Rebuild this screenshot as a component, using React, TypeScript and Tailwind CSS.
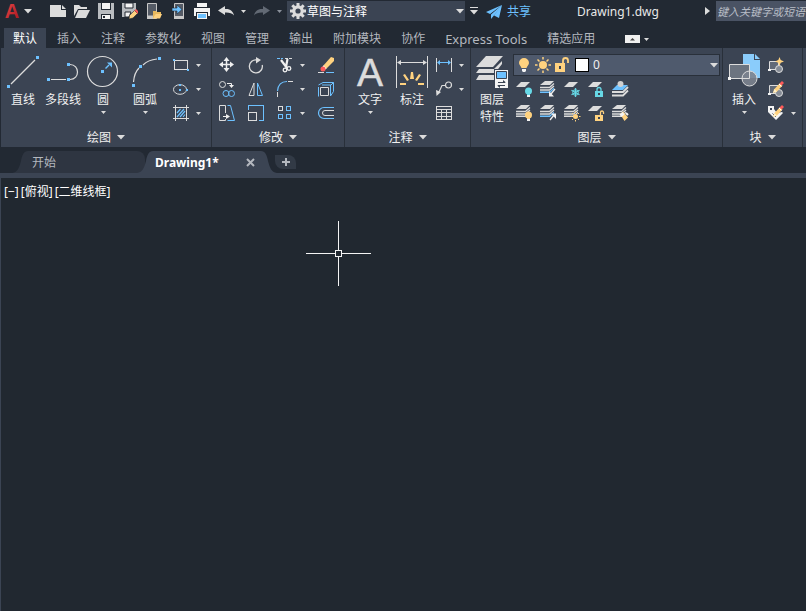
import type { ReactNode } from 'react'
import clsx from 'clsx'

const W = '#dcdcdc'
const B = '#6dc1ff'
const Y = '#ffd27f'
const C = '#67d8e6'
const R = '#ff5a5a'
const D = '#3b4453'

interface IconProps {
  size?: number
  crisp?: boolean
  children: ReactNode
}

function Icon({ size = 16, crisp, children }: IconProps) {
  return (
    <svg
      width={size}
      height={size}
      viewBox={`0 0 ${size} ${size}`}
      fill="none"
      shapeRendering={crisp ? 'crispEdges' : undefined}
      className="block shrink-0 overflow-visible"
      aria-hidden="true"
    >
      {children}
    </svg>
  )
}

function Caret({ large, className = 'fill-[#dcdcdc]' }: { large?: boolean; className?: string }) {
  return large ? (
    <svg width="8" height="5" viewBox="0 0 8 5" className={clsx('block shrink-0', className)} aria-hidden="true">
      <path d="M0 0h8L4 4.500z" />
    </svg>
  ) : (
    <svg width="5" height="3" viewBox="0 0 5 3" className={clsx('block shrink-0', className)} aria-hidden="true">
      <path d="M0 0h5L2.500 3z" />
    </svg>
  )
}

/* little square grips at the end points of the geometry */
function Grip({ x, y, s = 3 }: { x: number; y: number; s?: number }) {
  return <rect x={x} y={y} width={s} height={s} fill={B} shapeRendering="crispEdges" />
}

function Pencil() {
  return (
    <g>
      <path d="M6 10.500L12 4l2.500 2.500L8.500 13 5 14z" fill={Y} />
      <path d="M11.500 4.500L14 2l2 2-2.500 2.500z" fill={R} />
      <path d="M11 5l2.500 2.500" stroke="#fff" />
      <path d="M6.500 10l2.500 2.500-4 1.500z" fill="#fff1c9" />
    </g>
  )
}

function Padlock({ open, color }: { open?: boolean; color: string }) {
  return (
    <g>
      <rect x="7" y="10" width="8" height="6" fill={color} />
      <path d={open ? 'M12.500 10V7.500a1.500 1.500 0 0 1 3 0V9' : 'M9 10V8.500a2 2 0 0 1 4 0V10'} stroke={color} strokeWidth="1.300" />
      <rect x="10" y="12" width="2" height="2" fill={D} />
    </g>
  )
}

function SmallBulb({ color }: { color: string }) {
  return (
    <g>
      <circle cx="12.500" cy="10" r="3.500" fill={color} />
      <path d="M11 12h3v2h-3z" fill={color} />
      <path d="M11 14h3v2h-3z" fill="#f4f4f4" />
    </g>
  )
}

function SmallSun() {
  return (
    <g stroke={Y}>
      <circle cx="11.500" cy="11.500" r="2.500" fill={Y} stroke="none" />
      <path d="M11.500 6.500v1.500M11.500 15v1.500M6.500 11.500H8M15 11.500h1.500M8 8l1 1M14 14l1 1M8 15l1-1M14 9l1-1" />
    </g>
  )
}

function Sheet() {
  return <path d="M5 1h9L9 6H0z" fill={W} />
}

function Stack({ base = W }: { base?: string }) {
  return (
    <g>
      <path d="M5 0h9l-4 4H0z" fill={W} />
      <path d="M0 6.500h9.500L14 2.500M0 9h9.500L14 5" stroke={W} strokeWidth="1.300" />
      <path d="M0 10.500h9.500L14 6.500v1.500L10 12H0z" fill={base} />
    </g>
  )
}

const quickAccess: { label: string; icon: ReactNode }[] = [
  {
    label: '新建',
    icon: (
      <Icon>
        <path d="M0 2h11v5h5v7H0z" fill={W} />
        <path d="M12 2l4 4h-4z" fill={W} />
      </Icon>
    ),
  },
  {
    label: '打开',
    icon: (
      <Icon>
        <path d="M0 2h5l2 2h6v2H4l-4 7z" fill={W} />
        <path d="M4.500 7H16l-4 8H1z" fill={W} />
      </Icon>
    ),
  },
  {
    label: '保存',
    icon: (
      <Icon crisp>
        <path d="M0 0h16v16H0z" fill="#b9bcc0" />
        <path d="M3 0h10v7H3z" fill="#222933" />
        <path d="M4 0h8v6H4z" fill="#f4f4f4" />
        <path d="M3 11h10v5H3z" fill="#222933" />
        <path d="M4 12h8v4H4z" fill="#f4f4f4" />
        <path d="M5 13h2v2H5z" fill="#222933" />
      </Icon>
    ),
  },
  {
    label: '另存为',
    icon: (
      <Icon>
        <path d="M0 0h14v7l-6 7H0z" fill="#b9bcc0" />
        <path d="M3 0h8v5H3z" fill="#f4f4f4" stroke="#222933" />
        <path d="M3 9h6l-2 5H3z" fill="#f4f4f4" stroke="#222933" />
        <path d="M7.500 12.500l5-5 3 3-4.500 4.500-4 1z" fill={Y} stroke="#222933" strokeWidth=".6" />
        <path d="M12.500 7.500L14 6l2 2v2.500l-.5 0z" fill={R} />
      </Icon>
    ),
  },
  {
    label: '从移动设备打开',
    icon: (
      <Icon>
        <path d="M1.500 .5h9v15h-9z" fill="#555b66" stroke="#c8c8c8" />
        <path d="M1 12.500h8V16H1z" fill="#c8c8c8" />
        <path d="M7 8h3l1 1h4v2h-5l-3 5z" fill="#e9b95e" />
        <path d="M9.500 11H16l-2 4.500H7z" fill={Y} />
      </Icon>
    ),
  },
  {
    label: '保存到移动设备',
    icon: (
      <Icon>
        <path d="M4.500 .5h9v15h-9z" fill="#555b66" stroke="#c8c8c8" />
        <path d="M4 13h10v3H4z" fill="#c8c8c8" />
        <path d="M2 5h5V2l5 4.500L7 11V8H2z" fill={B} stroke="#222933" strokeWidth=".6" />
      </Icon>
    ),
  },
  {
    label: '打印',
    icon: (
      <Icon crisp>
        <path d="M3 0h10v4H3z" fill="#f4f4f4" />
        <path d="M0 5h16v8H0z" fill="#f4f4f4" />
        <path d="M2 9h12v7H2z" fill="#222933" />
        <path d="M3 10h10v6H3z" fill="#f4f4f4" />
        <path d="M4 11h8v4H4z" fill={B} />
      </Icon>
    ),
  },
]

function UndoIcon({ flip, color }: { flip?: boolean; color: string }) {
  return (
    <Icon>
      <g transform={flip ? 'matrix(-1 0 0 1 16 0)' : undefined}>
        <path d="M0 7.500L7 3v3c5-.5 8 2 9 6.500C14 10 11 9.300 7 9.500V12z" fill={color} />
      </g>
    </Icon>
  )
}

function GearIcon() {
  return (
    <Icon>
      <circle cx="8" cy="8" r="4.200" stroke={W} strokeWidth="3.200" />
      <path
        d="M8 0v3M8 13v3M0 8h3M13 8h3M2.300 2.300l2.200 2.200M11.500 11.500l2.200 2.200M2.300 13.700l2.200-2.200M11.500 4.500l2.200-2.200"
        stroke={W}
        strokeWidth="3"
      />
    </Icon>
  )
}

function TitleBar() {
  return (
    <header className="flex h-[22px] items-center">
      <button aria-label="应用程序菜单" className="flex w-[50px] shrink-0 items-center gap-1 pl-1">
        <svg width="16" height="22" viewBox="0 0 16 22" className="block overflow-visible" aria-hidden="true">
          <defs>
            <linearGradient id="brand" x1="0" y1="0" x2="1" y2="1">
              <stop offset="0" stopColor="#ef4a4a" />
              <stop offset="1" stopColor="#a3141c" />
            </linearGradient>
          </defs>
          <text
            x="8"
            y="18"
            textAnchor="middle"
            fontSize="20"
            fontWeight="700"
            fill="url(#brand)"
            className="font-['Liberation_Sans',sans-serif]"
          >
            A
          </text>
        </svg>
        <Caret large />
      </button>

      <div className="flex shrink-0 items-center gap-2">
        {quickAccess.map((item) => (
          <button key={item.label} aria-label={item.label}>
            {item.icon}
          </button>
        ))}
        <button aria-label="放弃" className="flex items-center gap-[7px]">
          <UndoIcon color={W} />
          <Caret />
        </button>
        <button aria-label="重做" className="flex items-center gap-[7px]">
          <UndoIcon flip color="#626974" />
          <Caret className="fill-[#8b919b]" />
        </button>
      </div>

      <div className="relative ml-[5px] flex h-5 w-[178px] shrink-0 items-center bg-[#3b4453] pl-[3px]">
        <GearIcon />
        <select aria-label="工作空间" className="h-5 w-full appearance-none bg-transparent pl-px pt-px text-white outline-none">
          <option>草图与注释</option>
        </select>
        <span className="pointer-events-none absolute right-px">
          <Caret large />
        </span>
      </div>

      <button aria-label="自定义快速访问工具栏" className="ml-[5px] shrink-0">
        <svg width="8" height="8" viewBox="0 0 8 8" className="block fill-[#dcdcdc]" aria-hidden="true">
          <path d="M0 0h8v1H0zM0 3h8L4 7.500z" />
        </svg>
      </button>
      <button className="ml-2 flex shrink-0 items-center gap-[5px] pt-px text-[#6dc1ff]">
        <Icon>
          <path d="M16 1L0 8l4 2zM16 1L5 10.500V15l2.500-3zM16 1l-8 10.500L13 14z" fill={B} />
        </Icon>
        共享
      </button>

      <h1 className="min-w-0 flex-1 truncate pt-px text-center text-[#e8e8e8]">Drawing1.dwg</h1>

      <button aria-label="展开搜索" className="mr-[6px] shrink-0">
        <svg width="5" height="8" viewBox="0 0 5 8" className="block fill-[#dcdcdc]" aria-hidden="true">
          <path d="M0 0l5 4-5 4z" />
        </svg>
      </button>
      <input
        type="text"
        aria-label="搜索"
        placeholder="键入关键字或短语"
        className="h-5 w-[90px] shrink-0 bg-[#4a5364] pl-px text-[11px] italic text-white outline-none placeholder:text-[#b9bec7]"
      />
    </header>
  )
}

const ribbonTabs = ['默认', '插入', '注释', '参数化', '视图', '管理', '输出', '附加模块', '协作', 'Express Tools', '精选应用']

function RibbonTabs() {
  return (
    <nav className="flex gap-5 overflow-hidden pl-[13px] pt-[6px] text-[#b4b8bf]">
      {ribbonTabs.map((tab, i) => (
        <button
          key={tab}
          className={clsx(
            'h-5 shrink-0 whitespace-nowrap pt-[2px]',
            i === 0 && '-mx-[9px] bg-[#3b4453] px-[9px] text-white',
            tab === 'Express Tools' && 'text-[13px]',
          )}
        >
          {tab}
        </button>
      ))}
      <button aria-label="最小化功能区" className="ml-[10px] flex shrink-0 items-center gap-1 pt-[2px]">
        <svg width="15" height="8" viewBox="0 0 15 8" className="block" aria-hidden="true">
          <rect width="15" height="8" fill="#f0f0f0" />
          <path d="M5 5.500h5L7.500 3z" fill="#444" />
        </svg>
        <Caret />
      </button>
    </nav>
  )
}

function BigButton({ icon, label, menu, className = 'w-[42px]' }: { icon: ReactNode; label: ReactNode; menu?: boolean; className?: string }) {
  return (
    <button className={clsx('flex shrink-0 flex-col items-center self-start pt-2 text-[#f0f0f0]', className)}>
      {icon}
      <span className="mt-[3px] whitespace-nowrap leading-[17px]">{label}</span>
      {menu && <Caret className="mt-[3px] fill-[#dcdcdc]" />}
    </button>
  )
}

function Tool({ label, menu, children }: { label: string; menu?: boolean; children: ReactNode }) {
  return (
    <button aria-label={label} className="flex h-6 items-center gap-[7px]">
      {children}
      {menu && <Caret />}
    </button>
  )
}

function Panel({ title, className, children }: { title: string; className: string; children: ReactNode }) {
  return (
    <section className={clsx('shrink-0 border-r border-[#29303a]', className)}>
      <div className="flex h-20">{children}</div>
      <button className="flex h-[19px] w-full items-center justify-center gap-[6px] text-[#f0f0f0]">
        {title}
        <Caret large />
      </button>
    </section>
  )
}

function DrawPanel() {
  return (
    <Panel title="绘图" className="w-[211px]">
      <div className="flex pl-[2px]">
        <BigButton
          className="w-10"
          label="直线"
          icon={
            <Icon size={32}>
              <path d="M4 28L28 4" stroke={W} strokeWidth="1.200" />
              <Grip x={0} y={29} />
              <Grip x={29} y={0} />
            </Icon>
          }
        />
        <BigButton
          className="w-10"
          label="多段线"
          icon={
            <Icon size={32}>
              <path d="M4 23.500h15M23 8.500c10 0 10 15 0 15" stroke={W} strokeWidth="1.200" />
              <Grip x={0} y={22} />
              <Grip x={20} y={22} />
              <Grip x={20} y={7} />
            </Icon>
          }
        />
        <BigButton
          className="w-10"
          label="圆"
          menu
          icon={
            <Icon size={32}>
              <circle cx="15.500" cy="15.500" r="15" stroke={W} strokeWidth="1.200" />
              <path d="M18.500 12.500L22 9" stroke={B} strokeWidth="1.500" />
              <path d="M20 6.500h5v5z" fill={B} />
              <Grip x={14} y={14} />
            </Icon>
          }
        />
        <BigButton
          className="w-11"
          label="圆弧"
          menu
          icon={
            <Icon size={32}>
              <path d="M4.500 26C5 20 7 15 10 12M14 9c4-4 8-5.500 14-6" stroke={W} strokeWidth="1.200" />
              <Grip x={3} y={28} />
              <Grip x={10} y={9} />
              <Grip x={29} y={1} />
            </Icon>
          }
        />
      </div>
      <div className="pl-[6px] pt-[5px]">
        <Tool label="矩形" menu>
          <Icon>
            <path d="M1.500 3.500h13v9h-13z" stroke={W} shapeRendering="crispEdges" />
            <Grip x={0} y={2} s={2} />
            <Grip x={14} y={12} s={2} />
          </Icon>
        </Tool>
        <Tool label="椭圆" menu>
          <Icon>
            <ellipse cx="7" cy="8.500" rx="6.500" ry="4.800" stroke={W} />
            <Grip x={6} y={8} s={2} />
            <Grip x={6} y={3} s={2} />
            <Grip x={13} y={8} s={2} />
          </Icon>
        </Tool>
        <Tool label="图案填充" menu>
          <Icon>
            <path d="M2.500 0v16M13.500 0v16M0 2.500h16M0 13.500h16" stroke={W} shapeRendering="crispEdges" />
            <path d="M4 8l3.500-4M4 12l7-8M7 12l5-6M10 12l2-2.500" stroke={B} strokeWidth="1.200" />
          </Icon>
        </Tool>
      </div>
    </Panel>
  )
}

function ModifyPanel() {
  return (
    <Panel title="修改" className="w-[133px]">
      <div className="grid grid-cols-[29px_29px_41px_16px] content-start pl-[7px] pt-[5px]">
        <Tool label="移动">
          <Icon>
            <path d="M7.500 2v11M2 7.500h11" stroke="#f0f0f0" strokeWidth="1.500" />
            <path d="M7.500 0l3 4h-6zM7.500 15l3-4h-6zM0 7.500l4-3v6zM15 7.500l-4-3v6z" fill="#f0f0f0" />
          </Icon>
        </Tool>
        <Tool label="旋转">
          <Icon>
            <path d="M9 3A6.500 6.500 0 1 0 14.200 8" stroke={W} strokeWidth="1.300" />
            <path d="M8 0l5 3-5 3.500z" fill={W} />
          </Icon>
        </Tool>
        <Tool label="修剪" menu>
          <Icon>
            <path d="M0 1.500h3M4 1.500h2" stroke={B} />
            <path d="M8 1.500h8" stroke={W} strokeDasharray="3 1" />
            <path d="M4 3l6 8M10.500 2L9 10" stroke="#f0f0f0" strokeWidth="2.200" />
            <circle cx="8" cy="13" r="1.800" stroke="#f0f0f0" strokeWidth="1.300" />
            <circle cx="12" cy="11.500" r="1.800" stroke="#f0f0f0" strokeWidth="1.300" />
          </Icon>
        </Tool>
        <Tool label="删除">
          <Icon>
            <path d="M5 9l8-9 3 1v3L8 12z" fill={Y} />
            <path d="M5 9l3 3" stroke="#fff" strokeWidth="1.500" />
            <circle cx="5" cy="12" r="2.500" fill={R} />
            <path d="M0 15.500h6" stroke={W} />
            <path d="M8 15.500h8" stroke={B} />
          </Icon>
        </Tool>
        <Tool label="复制">
          <Icon>
            <circle cx="3.500" cy="3.500" r="3" stroke={W} />
            <circle cx="7" cy="12.500" r="3" stroke={B} />
            <circle cx="12.500" cy="12.500" r="3" stroke={B} />
            <path d="M8 2.500h4.500V5" stroke="#f0f0f0" />
            <path d="M10 4h5l-2.500 3z" fill="#f0f0f0" />
          </Icon>
        </Tool>
        <Tool label="镜像">
          <Icon>
            <path d="M6 2v12.500H1z" stroke={W} />
            <path d="M9.500 2v12.500h5z" stroke={B} />
          </Icon>
        </Tool>
        <Tool label="圆角" menu>
          <Icon>
            <path d="M.5 16v-5M11 .5h5" stroke={W} />
            <path d="M.5 10C1 4 4 .5 10 .5" stroke={B} strokeWidth="1.200" />
          </Icon>
        </Tool>
        <Tool label="分解">
          <Icon>
            <path d="M.5 6v9.500M.5 4L5 1.500h10.500v9L12.500 15M4 4h9l2.500-2.500M12.500 4v11" stroke={B} />
            <path d="M2.500 6.500h8v8h-8z" stroke={W} />
          </Icon>
        </Tool>
        <Tool label="拉伸">
          <Icon>
            <path d="M6.500 8V.5h-6v15h6V14" stroke={W} />
            <path d="M8.500 .5h3l4 15h-7" stroke={B} />
            <path d="M4 11.500h5" stroke="#f0f0f0" />
            <path d="M7 9l4 2.500L7 14z" fill="#f0f0f0" />
          </Icon>
        </Tool>
        <Tool label="缩放">
          <Icon crisp>
            <path d="M.5 5V.5h15v15H11" stroke={B} />
            <path d="M.5 7.500h8v8h-8z" stroke={W} />
          </Icon>
        </Tool>
        <Tool label="阵列" menu>
          <Icon crisp>
            <path d="M1.500 1.500h4v4h-4z" stroke={W} />
            <path d="M9.500 1.500h4v4h-4zM1.500 9.500h4v4h-4zM9.500 9.500h4v4h-4z" stroke={B} />
          </Icon>
        </Tool>
        <Tool label="偏移">
          <Icon>
            <path d="M16 2.500H6a5.500 5.500 0 0 0 0 11h10" stroke={B} strokeWidth="1.200" />
            <path d="M16 5.500H7a2.500 2.500 0 0 0 0 5h9" stroke={W} />
          </Icon>
        </Tool>
      </div>
    </Panel>
  )
}

function AnnotatePanel() {
  return (
    <Panel title="注释" className="w-[126px]">
      <div className="flex pl-1">
        <BigButton
          label="文字"
          menu
          icon={
            <Icon size={32}>
              <text
                x="16"
                y="30"
                textAnchor="middle"
                fontSize="39"
                fill={W}
                stroke={W}
                strokeWidth=".5"
                className="font-['Liberation_Sans',sans-serif]"
              >
                A
              </text>
            </Icon>
          }
        />
        <BigButton
          label="标注"
          icon={
            <Icon size={32}>
              <path d="M.5 0v32M31.500 0v32" stroke={W} />
              <path d="M3 6.500h26" stroke={W} />
              <path d="M1 6.500L5 4v5zM31 6.500L27 4v5z" fill={W} />
              <path d="M15 16h2l1 7h-4zM7 19l2-1 4 6-2 1zM25 19l-2-1-4 6 2 1zM4 27l6 0v2H4zM28 27h-6v2h6z" fill={Y} />
            </Icon>
          }
        />
      </div>
      <div className="pl-[3px] pt-[5px]">
        <Tool label="线性标注" menu>
          <Icon>
            <path d="M.5 1v14M15.500 1v14" stroke={W} />
            <path d="M2 5.500h12" stroke={B} />
            <path d="M1 5.500L4 3v5zM15 5.500L12 3v5z" fill={B} />
          </Icon>
        </Tool>
        <Tool label="引线" menu>
          <Icon>
            <circle cx="12.500" cy="4" r="3" stroke={W} strokeWidth="1.200" />
            <path d="M9 4.500H6L2.500 12" stroke={W} strokeWidth="1.200" />
            <path d="M0 9l5 2-4.500 4z" fill={W} />
          </Icon>
        </Tool>
        <Tool label="表格">
          <Icon crisp>
            <path d="M.5 1.500h15v13H.5z" stroke={W} />
            <path d="M1 4.500h14M1 7.500h14M1 11.500h14M5.500 5v9M10.500 5v9" stroke={W} />
          </Icon>
        </Tool>
      </div>
    </Panel>
  )
}

const layerTools: { label: string; icon: ReactNode }[] = [
  { label: '关', icon: <><Sheet /><SmallBulb color={C} /></> },
  {
    label: '隔离',
    icon: (
      <>
        <Stack base={B} />
        <path d="M15 8l-4 5" stroke="#f0f0f0" strokeWidth="1.300" />
        <path d="M9 10v5.500h5z" fill="#f0f0f0" />
      </>
    ),
  },
  {
    label: '冻结',
    icon: (
      <>
        <Sheet />
        <circle cx="11.500" cy="11.500" r="2.800" stroke={C} />
        <path d="M11.500 7v9M7.500 9.300l8 4.500M7.500 13.700l8-4.500" stroke={C} strokeWidth="1.300" />
      </>
    ),
  },
  { label: '锁定', icon: <><Sheet /><Padlock color={C} /></> },
  {
    label: '置为当前',
    icon: (
      <>
        <path d="M5 4h11l-5 5H0z" fill={B} />
        <path d="M0 11h11l5-5M0 14.500h11l5-5" stroke={W} strokeWidth="1.800" />
        <circle cx="8.500" cy="3" r="3" fill="#d0d0d0" />
      </>
    ),
  },
  { label: '打开所有图层', icon: <><Stack /><SmallBulb color={Y} /></> },
  {
    label: '取消隔离',
    icon: (
      <>
        <Stack base={B} />
        <path d="M10 15l4-5" stroke="#f0f0f0" strokeWidth="1.300" />
        <path d="M11 8.500h5V14z" fill="#f0f0f0" />
      </>
    ),
  },
  { label: '解冻所有图层', icon: <><Stack /><SmallSun /></> },
  { label: '解锁', icon: <><Sheet /><Padlock open color={Y} /></> },
  {
    label: '匹配图层',
    icon: (
      <>
        <Stack />
        <path d="M8 9l3-2.500 5 6-3.500 3.500z" fill={Y} />
        <path d="M7.500 9.500L10.500 7l2 2.500-3 2.500z" fill="#f4f4f4" />
        <path d="M14 8l2 2" stroke="#f4f4f4" strokeWidth="2" />
      </>
    ),
  },
]

function LayerPanel() {
  return (
    <Panel title="图层" className="w-[252px]">
      <BigButton
        label={
          <>
            图层
            <br />
            特性
          </>
        }
        icon={
          <Icon size={32}>
            <path d="M10 0h17L17 11H0z" fill={W} />
            <path d="M3 13h15l8-8v3l-7 9H0z" fill={W} />
            <path d="M3 19h15l6-6v3l-5 8H0z" fill={W} />
            <path d="M18 13h14v19H18z" fill={D} />
            <path d="M19 14h13v18H19z" fill="#f4f4f4" />
            <path d="M20.500 15.500h10v7h-10z" fill={B} stroke={D} />
            <path d="M22 26.500h7M22 29.500h7" stroke={D} />
            <path d="M27 24l3 2.500h-3zM24 32l-3-2.500h3z" fill={D} />
          </Icon>
        }
      />
      <div className="min-w-0 flex-1 pr-[2px] pt-[6px]">
        <div className="relative flex h-[22px] items-center gap-[3px] border border-[#29303a] bg-[#4f5a6d] pl-[2px]">
          <Icon>
            <path d="M8 1a5 5 0 0 1 5 5c0 2-2 3-2.500 5h-5C5 9 3 8 3 6a5 5 0 0 1 5-5z" fill={Y} />
            <path d="M6 12h4v2l-1 1H7l-1-1z" fill="#f4f4f4" />
          </Icon>
          <Icon>
            <circle cx="8" cy="8" r="4" fill={Y} />
            <path
              d="M8 0v2.500M8 13.500V16M0 8h2.500M13.500 8H16M2.500 2.500l2 2M11.500 11.500l2 2M2.500 13.500l2-2M11.500 4.500l2-2"
              stroke={Y}
              strokeWidth="1.500"
            />
          </Icon>
          <Icon>
            <path d="M1 6h10v9H1z" fill={Y} />
            <path d="M9 6V3.500a2.500 2.500 0 0 1 5 0V6" stroke={Y} strokeWidth="1.800" />
            <path d="M5 9h2v3H5z" fill={D} />
          </Icon>
          <span className="ml-[2px] size-[14px] shrink-0 border border-black bg-white" />
          <select aria-label="当前图层" className="h-5 w-full appearance-none bg-transparent pl-px text-[#f0f0f0] outline-none">
            <option>0</option>
          </select>
          <span className="pointer-events-none absolute right-px">
            <Caret large />
          </span>
        </div>
        <div className="grid grid-cols-[repeat(5,24px)] pl-[3px] pt-px">
          {layerTools.map((tool) => (
            <Tool key={tool.label} label={tool.label}>
              <Icon>{tool.icon}</Icon>
            </Tool>
          ))}
        </div>
      </div>
    </Panel>
  )
}

function BlockShape() {
  return (
    <g>
      <path d="M1.500 4.500h9v8h-9z" fill="#626a77" stroke={W} />
      <circle cx="11" cy="12" r="3.500" fill="#858b95" stroke={W} />
      <path d="M0 12h3v2H0z" fill="#f4f4f4" />
    </g>
  )
}

function BlockPanel() {
  return (
    <Panel title="块" className="w-20">
      <BigButton
        label="插入"
        menu
        icon={
          <Icon size={32}>
            <path d="M15-2h11v6h6v18H15z" fill="#8accfb" />
            <path d="M27-2l5 5h-5z" fill="#8accfb" />
            <path d="M1.500 8.500h20v14h-20z" fill="#6c7480" stroke={W} />
            <circle cx="21.500" cy="22.500" r="7.500" fill="#7c838e" fillOpacity=".9" stroke={W} />
            <path d="M21.500 15v7.500H14" stroke={W} />
            <path d="M0 21h3v3H0z" fill="#f4f4f4" />
          </Icon>
        }
      />
      <div className="pl-[3px] pt-[5px]">
        <Tool label="创建块">
          <Icon>
            <BlockShape />
            <path d="M11.500 0l1.200 3 3.300 1.500-3.300 1.200-1.200 3.300-1.200-3.300L7 4.500 10.300 3z" fill={Y} />
          </Icon>
        </Tool>
        <Tool label="编辑块">
          <Icon>
            <BlockShape />
            <g transform="translate(0 -2)">
              <Pencil />
            </g>
          </Icon>
        </Tool>
        <Tool label="编辑属性" menu>
          <Icon>
            <path d="M0 1h6v3l3 4 5-1 1 1-7 7L0 7z" fill="#f4f4f4" />
            <path d="M2 3h2v2H2z" fill={D} />
            <path d="M4.500 8.500L8 12" stroke={D} />
            <g transform="translate(0 -2)">
              <Pencil />
            </g>
          </Icon>
        </Tool>
      </div>
    </Panel>
  )
}

function TabEdge({ right, fill }: { right?: boolean; fill: string }) {
  return (
    <svg width="16" height="22" viewBox="0 0 16 22" className={clsx('block shrink-0', fill, right && '-scale-x-100')} aria-hidden="true">
      <path d="M0 22C6 21 7 17 9 10 10 4 12 0 16 0v22z" />
    </svg>
  )
}

function FileTabs() {
  return (
    <div className="flex h-[26px] items-end overflow-hidden pl-3">
      <TabEdge fill="fill-[#2e3541]" />
      <button className="h-[22px] w-[117px] shrink-0 rounded-tr-lg bg-[#2e3541] pl-1 pt-[2px] text-left text-[#b4b8bf]">开始</button>
      <div className="z-10 -ml-2 flex shrink-0">
        <TabEdge fill="fill-[#3b4453]" />
        <div className="flex w-[108px] items-center justify-between bg-[#3b4453] pl-[2px] pr-[6px]">
          <button className="pt-[2px] font-bold text-white">Drawing1*</button>
          <button aria-label="关闭">
            <svg width="9" height="9" viewBox="0 0 9 9" className="block stroke-[#b4b8bf]" strokeWidth="2" aria-hidden="true">
              <path d="M1 1l7 7M8 1L1 8" />
            </svg>
          </button>
        </div>
        <TabEdge right fill="fill-[#3b4453]" />
      </div>
      <button
        aria-label="新建选项卡"
        className="-ml-[2px] mb-1 flex h-[14px] w-[21px] shrink-0 items-center justify-center rounded-bl-lg rounded-tr-lg bg-[#323a46]"
      >
        <svg width="8" height="8" viewBox="0 0 8 8" className="block fill-[#b4b8bf]" aria-hidden="true">
          <path d="M3 0h2v3h3v2H5v3H3V5H0V3h3z" />
        </svg>
      </button>
    </div>
  )
}

function Viewport() {
  return (
    <main className="relative flex-1 border-l border-t-[5px] border-[#3b4453] bg-[#212830]">
      <div className="flex gap-[2px] pl-[3px] pt-[6px] leading-4 text-white">
        <button>[−]</button>
        <button>[俯视]</button>
        <button>[二维线框]</button>
      </div>
      <svg width="65" height="65" viewBox="0 0 65 65" fill="none" className="absolute left-[305px] top-[43px]" shapeRendering="crispEdges" aria-hidden="true">
        <path d="M0 32.500h29M36 32.500h29M32.500 0v29M32.500 36v29M29.500 29.500h6v6h-6z" stroke="#f4f4f4" />
      </svg>
    </main>
  )
}

export default function App() {
  return (
    <div className="flex min-h-screen flex-col overflow-hidden bg-[#222933] font-['Noto_Sans','Noto_Sans_CJK_SC',sans-serif] text-[12px]">
      <TitleBar />
      <RibbonTabs />
      <div className="ml-px flex overflow-hidden bg-[#3b4453]">
        <DrawPanel />
        <ModifyPanel />
        <AnnotatePanel />
        <LayerPanel />
        <BlockPanel />
      </div>
      <FileTabs />
      <Viewport />
    </div>
  )
}
